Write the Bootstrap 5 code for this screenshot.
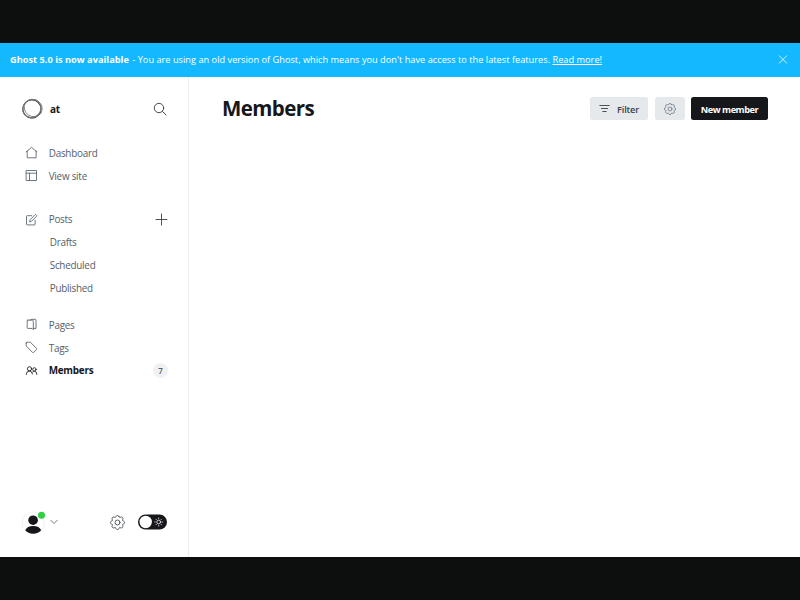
<!DOCTYPE html>
<html lang="en">
<head>
<meta charset="utf-8">
<meta name="viewport" content="width=device-width, initial-scale=1">
<title>Members</title>
<link href="https://cdn.jsdelivr.net/npm/bootstrap@5.3.0/dist/css/bootstrap.min.css" rel="stylesheet">
<style>
body{font-family:"Open Sans","Noto Sans",sans-serif;font-size:9.9px;line-height:1.2;color:#15171a;height:600px;overflow:hidden;background:#fff}
svg{display:block;flex:none;fill:none;stroke-linecap:round;stroke-linejoin:round}
.line{stroke:currentColor}
.slate{color:#394047}.soft{color:#626d79}
.frame-bar{height:43px;background:#0d0e0e}
.upgrade{height:34px;background:#14b8ff;font-size:9.2px;padding:0 12px 1px 10px;white-space:nowrap}
.upgrade b{letter-spacing:.03px}
.upgrade .rest{letter-spacing:.022px;margin-left:1px}
.app{height:480px}
.sidebar{width:189px;border-right:1px solid #eceef0}
.site-head{height:64.6px;padding:0 21px 1px 22px}
.site-name{font-size:10px;margin-left:7px;letter-spacing:-.2px}
.menu{margin:0;padding:0 20px 0 25px}
.menu .nav-link{height:22.7px;padding:0;color:#54606b;white-space:nowrap;letter-spacing:-.24px}
.menu .nav-link svg{width:13px;height:13px;margin-right:11px;stroke-width:.85}
.menu .label{padding-top:2px;margin-left:-.3px}
.menu .sub{padding-left:25px}
.menu .nav-link.active{color:#15171a;font-weight:700}
.menu .nav-link .plus{margin:0;color:#394047;stroke-width:.9}
.gap-a{margin-bottom:21.1px}.gap-b{margin-bottom:14.8px}
.count{width:15px;height:15px;font-size:8px;font-weight:600;color:#54606b;background:#eff1f3;letter-spacing:0}
.side-foot{padding:0 21px 22.5px 22px}
.avatar{width:23px;height:25px}
.caret{margin-left:5px}
.toggle{margin-left:13px}
.page-title{font-size:20.5px;font-weight:700;margin:0;line-height:24px;letter-spacing:-.57px;padding-bottom:2px}
.page-head{height:64px;padding:0 32px 1px 33px}
.tool{height:23px;padding:0;border:0;border-radius:2.5px;font-size:9.2px;font-weight:600;line-height:1;display:flex;align-items:center;justify-content:center;background:#e6e9eb;color:#394047;white-space:nowrap;letter-spacing:-.15px}
.tool span{padding-top:1.5px}
.tool.dark{background:#15171a;color:#fff;width:77px;font-weight:700;letter-spacing:-.45px;margin-left:6px}
.w-filter{width:58px;margin-right:7px}.w-filter svg{margin-right:7px}
.w-gear{width:30px}.w-gear svg{color:#626d79;margin-right:1px}
</style>
<script src="https://cdn.jsdelivr.net/npm/bootstrap@5.3.0/dist/js/bootstrap.bundle.min.js"></script>
</head>
<body>
<svg class="d-none"><symbol id="gear" viewBox="-.5 -.5 17 17"><circle cx="8" cy="8" r="2.8"/><path d="M9.796 1.343c-.527-1.79-3.065-1.79-3.592 0l-.094.319a.873.873 0 0 1-1.255.52l-.292-.16c-1.64-.892-3.433.902-2.54 2.541l.159.292a.873.873 0 0 1-.52 1.255l-.319.094c-1.79.527-1.79 3.065 0 3.592l.319.094a.873.873 0 0 1 .52 1.255l-.16.292c-.892 1.64.901 3.434 2.541 2.54l.292-.159a.873.873 0 0 1 1.255.52l.094.319c.527 1.79 3.065 1.79 3.592 0l.094-.319a.873.873 0 0 1 1.255-.52l.292.16c1.64.893 3.434-.902 2.54-2.541l-.159-.292a.873.873 0 0 1 .52-1.255l.319-.094c1.79-.527 1.79-3.065 0-3.592l-.319-.094a.873.873 0 0 1-.52-1.255l.16-.292c.893-1.64-.902-3.433-2.541-2.54l-.292.159a.873.873 0 0 1-1.255-.52z"/></symbol></svg>
<div class="frame-bar"></div>
<div class="upgrade d-flex align-items-center justify-content-between text-white">
  <div><b>Ghost 5.0 is now available</b> <span class="rest">- You are using an old version of Ghost, which means you don't have access to the latest features. <a href="#" class="text-white text-decoration-underline">Read more!</a></span></div>
  <svg class="line" width="10" height="10" viewBox="0 0 10 10" stroke-width=".8"><path d="M1.3 .8l7.4 7.4M8.7 .8L1.3 8.2"/></svg>
</div>
<div class="app d-flex">
  <aside class="sidebar d-flex flex-column flex-shrink-0">
    <div class="site-head d-flex align-items-center">
      <svg width="21" height="21" viewBox="0 0 21 21" stroke="#444"><circle cx="9.9" cy="11" r="9.1" stroke-width="1.2"/><ellipse cx="11.2" cy="9.9" rx="9.3" ry="8.5" stroke-width=".8" stroke="#777" transform="rotate(35 11 10)"/><ellipse cx="10.3" cy="10.4" rx="8.8" ry="9.5" stroke-width=".9" stroke="#777" transform="rotate(50 10 10)"/></svg>
      <b class="site-name">at</b>
      <svg class="line slate ms-auto" width="14" height="14" viewBox="0 0 14 14" stroke-width=".95"><circle cx="6" cy="6" r="4.7"/><path d="M9.5 9.5l3.6 3.5"/></svg>
    </div>
    <nav class="menu nav flex-column flex-nowrap">
      <a href="#" class="nav-link d-flex align-items-center"><svg class="line" viewBox="0 0 13 13"><path d="M1.2 5.8L6.5 1.4l5.3 4.4M2.2 5.2v6.6h8.9V5.2"/></svg><span class="label">Dashboard</span></a>
      <a href="#" class="nav-link d-flex align-items-center gap-a"><svg class="line" viewBox="0 0 13 13"><path d="M1.5 1.5h10v10h-10zM1.5 4.2h10M4.5 4.2v7.3"/></svg><span class="label">View site</span></a>
      <a href="#" class="nav-link d-flex align-items-center"><svg class="line" viewBox="0 0 13 13"><path d="M6.5 2.7H2.2q-.7 0-.7.7v7.8q0 .7.7.7h7.2q.7 0 .7-.7V7.3M4.7 8.7l.6-2.2 4.8-4.8q.5-.5 1 0l.5.5q.5.5 0 1L6.8 8z"/></svg><span class="label">Posts</span><svg class="line plus ms-auto" viewBox="0 0 13 13"><path d="M6.5 1v11M1 6.5h11"/></svg></a>
      <a href="#" class="nav-link d-flex align-items-center sub"><span class="label">Drafts</span></a>
      <a href="#" class="nav-link d-flex align-items-center sub"><span class="label">Scheduled</span></a>
      <a href="#" class="nav-link d-flex align-items-center sub gap-b"><span class="label">Published</span></a>
      <a href="#" class="nav-link d-flex align-items-center"><svg class="line" viewBox="0 0 13 13"><path d="M2.9 2.1h4.5q.8 0 .9.8v8.8L7 10.4H2.9q-.7 0-.7-.7V2.8q0-.7.7-.7zM5.3 2.1q0-.8.8-.8h4.1q.8 0 .8.8v8.3H8.3"/></svg><span class="label">Pages</span></a>
      <a href="#" class="nav-link d-flex align-items-center"><svg class="line" viewBox="0 0 13 13"><path d="M1.2 2v3l6.2 6.3q.7.7 1.4 0l2.7-2.7q.6-.7 0-1.3L5.3 1.2H2q-.8 0-.8.8z"/></svg><span class="label">Tags</span></a>
      <a href="#" class="nav-link d-flex align-items-center active"><svg class="line" viewBox="0 0 13 13"><circle cx="4.5" cy="4.8" r="2.1"/><circle cx="9.4" cy="5.4" r="1.7"/><path d="M1.2 10.4q.2-3.4 3.3-3.4 2.4 0 3 3M7.6 8q.7-.8 1.8-.8 2.4 0 2.5 3.2"/></svg><span class="label">Members</span><span class="count rounded-circle ms-auto d-flex align-items-center justify-content-center">7</span></a>
    </nav>
    <div class="side-foot d-flex align-items-center mt-auto">
      <svg class="avatar" viewBox="0 0 23 25"><circle cx="11.3" cy="12.9" r="11" fill="#fff" stroke="#e9ebed" stroke-width=".7"/><circle cx="11.1" cy="10.2" r="4.8" fill="#15171a"/><path d="M3.2 20.3q1.8-4.4 8-4.4t8 4.4q-3 3.4-8 3.4t-8-3.4z" fill="#15171a"/><circle cx="19.5" cy="5.3" r="3.5" fill="#30cf43"/></svg>
      <svg class="line soft caret" width="8" height="6" viewBox="0 0 8 6" stroke-width=".9"><path d="M.7 1.2L4 4.5l3.3-3.3"/></svg>
      <svg class="line slate ms-auto" width="15" height="15" stroke-width=".95"><use href="#gear"/></svg>
      <svg class="toggle" width="29" height="16" viewBox="0 0 29 16"><rect y=".5" width="29" height="15" rx="7.5" fill="#15171a"/><circle cx="7.7" cy="8" r="6.2" fill="#fff"/><g stroke="#fff" stroke-width=".75"><circle cx="20.7" cy="8" r="1.9"/><path d="M20.7 4v.6M20.7 11.4v.6M16.7 8h.6M24.1 8h.6M17.9 5.2l.4.4M23.1 10.4l.4.4M17.9 10.8l.4-.4M23.1 5.6l.4-.4"/></g></svg>
    </div>
  </aside>
  <main class="flex-grow-1">
    <header class="page-head d-flex align-items-center justify-content-between">
      <h1 class="page-title">Members</h1>
      <div class="d-flex">
        <button class="btn tool w-filter"><svg class="line" width="11" height="9" viewBox="0 0 11 9" stroke-width=".9"><path d="M.8 1.5h9.4M2.4 4.5h6.2M3.8 7.5h3.4"/></svg><span>Filter</span></button>
        <button class="btn tool w-gear"><svg class="line" width="12" height="12" stroke-width="1.1"><use href="#gear"/></svg></button>
        <button class="btn tool dark"><span>New member</span></button>
      </div>
    </header>
  </main>
</div>
<div class="frame-bar"></div>
</body>
</html>
